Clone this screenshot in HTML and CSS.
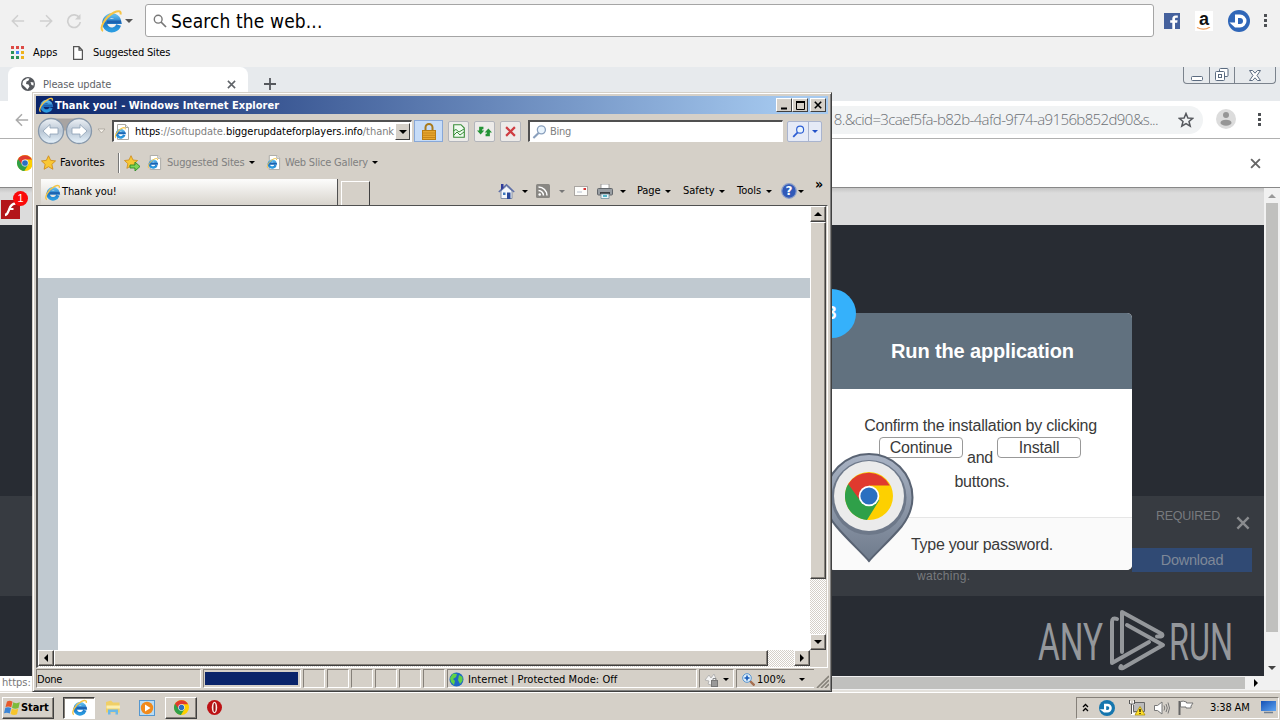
FILE: index.html
```html
<!DOCTYPE html>
<html lang="en">
<head>
<meta charset="utf-8">
<title>Desktop</title>
<link rel="stylesheet" href="styles.css">
</head>
<body>
<svg class="defs" width="0" height="0">
  <defs>
    <linearGradient id="blue" x1="0" y1="0" x2="0" y2="1"><stop offset="0" stop-color="#5cb9ec"/><stop offset=".5" stop-color="#1f74c4"/><stop offset="1" stop-color="#2a9be0"/></linearGradient>
    <linearGradient id="orb" x1="0" y1="0" x2="0" y2="1"><stop offset="0" stop-color="#eef2f6"/><stop offset=".5" stop-color="#b9c6d4"/><stop offset="1" stop-color="#e6f2fb"/></linearGradient>
    <linearGradient id="pin" x1="0" y1="0" x2="0" y2="1"><stop offset="0" stop-color="#a9b3c4"/><stop offset="1" stop-color="#6f7b8c"/></linearGradient>
    <linearGradient id="screen" x1="0" y1="0" x2="1" y2="1"><stop offset="0" stop-color="#1450b4"/><stop offset="1" stop-color="#5fa5f2"/></linearGradient>
  </defs>
  <symbol id="ie" viewBox="0 0 24 24">
    <path d="M19.600 16A7.100 7.100 0 1 1 19.800 12.500H8" fill="none" stroke="url(#blue)" stroke-width="5"/>
    <path d="M8 12.800h14" stroke="#1c62b0" stroke-width="2.600"/>
    <path d="M4 22C-.5 20 6 8 15 3.500 19 1.500 22.500 1.500 21.500 5.500" fill="none" stroke="#f5c445" stroke-width="2"/>
  </symbol>
  <symbol id="iepage" viewBox="0 0 16 16">
    <path d="M3.500.5h8l3 3v12h-11z" fill="#fff" stroke="#a9a9a4"/><path d="M11.500.5v3h3" fill="#eee" stroke="#a9a9a4"/>
    <use href="#ie" x="0" y="2.500" width="12.500" height="12.500"/>
  </symbol>
  <symbol id="chrome" viewBox="0 0 48 48">
    <circle cx="24" cy="24" r="24" fill="#fdd000"/>
    <path d="M24 24 3.200 12A24 24 0 0 0 22 48L34.400 28z" fill="#2fa049"/>
    <path d="M24 24 14 27 3.200 12A24 24 0 0 1 44.800 13.500H24z" fill="#e03a2e"/>
    <circle cx="24" cy="24" r="10.300" fill="#fff"/><circle cx="24" cy="24" r="8.600" fill="#2b6fc0"/>
  </symbol>
  <symbol id="x" viewBox="0 0 10 10"><path d="M1 1l8 8M9 1 1 9" fill="none" stroke="currentColor" stroke-width="1.700"/></symbol>
  <symbol id="left" viewBox="0 0 16 16"><path d="M15 8H2M8 1.500 1.500 8 8 14.500" fill="none" stroke="currentColor" stroke-width="1.700"/></symbol>
  <symbol id="star" viewBox="0 0 16 16"><path d="M8 .8 10.300 5.700 15.500 6.300 11.600 9.900 12.700 15.200 8 12.500 3.300 15.200 4.400 9.900.5 6.300 5.700 5.700z" fill="#f9c834" stroke="#cf8a17" stroke-width=".9"/></symbol>
  <symbol id="glass" viewBox="0 0 16 16"><path d="M1.500 14.500 7 9" stroke="currentColor" stroke-width="2.200"/><circle cx="10" cy="5.700" r="4.300" fill="#e9f4fd" stroke="currentColor" stroke-width="1.400"/></symbol>
</svg>

<main class="desktop">
  <section class="browser">
    <header class="launcher">
      <svg class="l-back" width="14" height="14"><use href="#left"/></svg>
      <svg class="l-fwd" width="14" height="14"><use href="#left"/></svg>
      <svg class="l-reload" width="16" height="16" viewBox="0 0 16 16"><path d="M13.500 5A6.300 6.300 0 1 0 14.300 9" fill="none" stroke="currentColor" stroke-width="1.700"/><path d="M14.500 1v5.500H9z" fill="currentColor"/></svg>
      <svg class="l-ie" width="24" height="24"><use href="#ie"/></svg>
      <i class="caret gray big"></i>
      <div class="search">
        <svg width="14" height="14" viewBox="0 0 14 14"><circle cx="5.200" cy="5.200" r="3.900" fill="none" stroke="#777" stroke-width="1.400"/><path d="M8 8l5 5" stroke="#777" stroke-width="1.700"/></svg>
        <span>Search the web...</span>
      </div>
      <svg class="l-fb" width="16" height="16" viewBox="0 0 16 16"><rect width="16" height="16" fill="#45619d"/><path d="M11 16V9.700h2.200l.4-2.400H11V6c0-.9.400-1.300 1.400-1.300h1.400V2.400h-2.100C9.300 2.400 8.300 3.700 8.300 5.800v1.500H6.200v2.400h2.100V16z" fill="#fff"/></svg>
      <div class="l-amazon"><b>a</b><svg width="16" height="5" viewBox="0 0 16 5"><path d="M1 .5Q8 4 14 0" fill="none" stroke="#f09a55" stroke-width="1.200"/></svg></div>
      <svg class="l-d" width="22" height="22" viewBox="0 0 22 22"><circle cx="11" cy="11" r="11" fill="#2f66b8"/><path d="M7 4.500h5a6.500 6.500 0 0 1 0 13H7L1.500 12.500H7z" fill="#fff"/><path d="M10 8h2a3 3 0 0 1 0 6h-2z" fill="#2f66b8"/></svg>
      <i class="dots"></i>
    </header>
    <nav class="bookmarks">
      <svg width="13" height="13" viewBox="0 0 13 13"><path d="M0 0h3v3H0zM5 0h3v3H5zM10 0h3v3h-3z" fill="#dd4b45"/><path d="M0 5h3v3H0zM0 10h3v3H0zM5 10h3v3H5z" fill="#2c9156"/><path d="M5 5h3v3H5z" fill="#4285f4"/><path d="M10 5h3v3h-3zM10 10h3v3h-3z" fill="#eeb21c"/></svg>
      <span class="b-apps">Apps</span>
      <svg width="10" height="14" viewBox="0 0 10 14"><path d="M.6.6h5.400l3.400 3.600v9.200H.6zM6 .6v3.600h3.400" fill="#fff" stroke="#555" stroke-width="1.200"/></svg>
      <span class="b-sites">Suggested Sites</span>
    </nav>
    <div class="tabstrip">
      <div class="tab">
        <svg width="14" height="14" viewBox="0 0 14 14"><circle cx="7" cy="7" r="7" fill="#55585d"/><path d="M6 1.200 8.500 1.500 7.500 3.500 5.500 4.500 5 7 7.500 7.500 8.500 9.500 6.500 12.500 4 10 1.300 7.500 2 4z" fill="#fff"/><path d="M9.500 5l3 .5v3L10.500 8z" fill="#fff"/></svg>
        <span>Please update</span>
        <svg width="9" height="9"><use href="#x"/></svg>
      </div>
      <svg class="plus" width="12" height="12" viewBox="0 0 12 12"><path d="M6 0v12M0 6h12" stroke="#55585d" stroke-width="1.800"/></svg>
      <div class="winbtns">
        <span><svg width="12" height="5" viewBox="0 0 12 5"><rect x=".5" y=".5" width="11" height="4" rx="1" fill="#fff" stroke="#5b6b80"/></svg></span>
        <span><svg width="14" height="13" viewBox="0 0 14 13"><rect x="4.500" y=".5" width="8.500" height="8" rx="1" fill="#fff" stroke="#5b6b80"/><rect x=".5" y="3.500" width="9" height="9" rx="1" fill="#fff" stroke="#5b6b80"/><rect x="3.500" y="6.500" width="3" height="3" fill="none" stroke="#5b6b80"/></svg></span>
        <span><svg width="12" height="11" viewBox="0 0 12 11"><path d="M.5.5h3L6 3.200 8.500.5h3L8 5.500l3.500 5h-3L6 7.800 3.500 10.500h-3L4 5.500z" fill="#fff" stroke="#5b6b80"/></svg></span>
      </div>
    </div>
    <div class="toolbar">
      <svg class="t-back" width="14" height="14"><use href="#left"/></svg>
      <div class="omnibox"><span>8.&amp;cid=3caef5fa-b82b-4afd-9f74-a9156b852d90&amp;s...</span>
        <svg width="16" height="16" viewBox="0 0 16 16"><path d="M8 1.500 9.900 6 14.700 6.300 11 9.500 12.200 14.200 8 11.600 3.800 14.200 5 9.500 1.300 6.300 6.100 6z" fill="none" stroke="#55585d" stroke-width="1.500"/></svg></div>
      <svg class="avatar" width="20" height="20" viewBox="0 0 20 20"><circle cx="10" cy="10" r="10" fill="#dcdcdc"/><circle cx="10" cy="6" r="3" fill="#969696"/><ellipse cx="10" cy="13.700" rx="5.500" ry="3" fill="#969696"/></svg>
      <i class="dots"></i>
    </div>
    <div class="infobar">
      <svg width="16" height="16"><use href="#chrome"/></svg>
      <svg class="i-close" width="11" height="11"><use href="#x"/></svg>
    </div>
    <div class="viewport">
      <div class="page">
        <div class="pagehead">
          <div class="flash"><svg width="19" height="19" viewBox="0 0 19 19"><rect width="19" height="19" fill="#b3151a"/><path d="M14.500 3.500C10 3.500 9 7 8 9.800 7 12.500 6.500 14.800 4 15" fill="none" stroke="#fff" stroke-width="2.300"/><path d="M8 9h4.500" stroke="#fff" stroke-width="2"/></svg><b>1</b></div>
        </div>
        <div class="stage">
          <div class="promo">
            <span class="watching">watching.</span>
            <div class="promo-side">
              <div class="req"><span>REQUIRED</span><svg width="14" height="14"><use href="#x"/></svg></div>
              <div class="download">Download</div>
            </div>
          </div>
          <article class="card">
            <h2>Run the application</h2>
            <div class="steps">
              <p>Confirm the installation by clicking</p>
              <div class="btns"><span class="key">Continue</span><em>and</em><span class="key">Install</span></div>
              <p class="last">buttons.</p>
            </div>
            <footer>Type your password.</footer>
            <b class="stepno">3</b>
            <svg class="pin" width="90" height="110" viewBox="0 0 90 110"><path d="M45 108C39 101 21 84 12 73 5 65 1.500 57 1.500 44.500a43.500 43.500 0 0 1 87 0C88.500 57 84 65 78 73 69 84 51 101 45 108z" fill="url(#pin)" stroke="#596373" stroke-width="2"/><circle cx="45" cy="44.500" r="37.500" fill="#6d7889"/><circle cx="45" cy="43" r="35" fill="#ebebeb"/><use href="#chrome" x="21" y="18" width="48" height="50"/></svg>
          </article>
          <svg class="anyrun" width="210" height="66" viewBox="0 0 210 66">
            <text x="1" y="50.500" textLength="65" lengthAdjust="spacingAndGlyphs">ANY</text>
            <g fill="none" stroke="#94979b" stroke-width="4" stroke-linejoin="round" stroke-linecap="round"><path d="M80 10Q75 8 75 13V54L112 33"/><path d="M85 43V3L125 25Q127 28 120 27.500"/><path d="M90 16 126 36 86 59Q82 60 84 57"/></g>
            <text x="132" y="50.500" textLength="64" lengthAdjust="spacingAndGlyphs">RUN</text>
          </svg>
        </div>
      </div>
      <div class="cscroll"><i class="tri up"></i><i class="cthumb"></i><i class="tri down"></i></div>
    </div>
    <div class="hscroll"><span class="statusurl">https:</span><i class="hthumb"></i><i class="tri right"></i></div>
  </section>

  <section class="iewin">
    <div class="title">
      <svg width="16" height="16"><use href="#ie"/></svg><b>Thank you! - Windows Internet Explorer</b>
      <span class="tb"><svg width="9" height="9" viewBox="0 0 9 9"><path d="M1 7.500h6" stroke="#000" stroke-width="2"/></svg></span>
      <span class="tb"><svg width="9" height="9" viewBox="0 0 9 9"><path d="M.5 1v7.500h8V1M0 1h9" fill="none" stroke="#000"/><path d="M0 1h9" stroke="#000" stroke-width="2"/></svg></span>
      <span class="tb tbx"><svg width="8" height="8" viewBox="0 0 10 10"><path d="M1 1l8 8M9 1 1 9" stroke="#000" stroke-width="2"/></svg></span>
    </div>
    <div class="navrow">
      <svg class="orbs" width="56" height="28" viewBox="0 0 56 28"><path d="M14 1.500h28v12H14z" fill="#a8a4a2"/><g fill="url(#orb)" stroke="#8697aa" stroke-width="1.300"><circle cx="14" cy="14" r="12.500"/><circle cx="42" cy="14" r="12.500"/></g><path d="M6 14 13 7.500V11h8v6h-8v3.500zM50 14 43 7.500V11h-8v6h8v3.500z" fill="#fff" stroke="#8ca0b4" stroke-width=".8"/></svg>
      <svg class="heart" width="9" height="6" viewBox="0 0 9 6"><path d="M1 1h7L4.500 5z" fill="#f5f1ea" stroke="#a8a39b" stroke-width=".8"/></svg>
      <div class="addr"><svg width="16" height="16"><use href="#iepage"/></svg><span>https<i>://softupdate.</i>biggerupdateforplayers.info<i>/thank</i></span><div class="combo"><i class="tri down"></i></div></div>
      <div class="lock"><svg width="16" height="17" viewBox="0 0 16 17"><path d="M4.500 8V4.500a3.500 3.500 0 0 1 7 0V8" fill="none" stroke="#a87a1c" stroke-width="2"/><rect x="1.500" y="7.500" width="13" height="9" fill="#e8a72e" stroke="#b97d14"/><path d="M2 10h12M2 12.300h12M2 14.500h12" stroke="#c88618"/></svg></div>
      <div class="nb compat"><svg width="12" height="14" viewBox="0 0 12 14"><path d="M.7.7H8l3.300 3.300v9.300H.7z" fill="#f0fbf0" stroke="#388c38" stroke-width="1.100"/><path d="M0 7 3 5.500 6 8l5-3M1 11l3-3 3 3 4-3" fill="none" stroke="#388c38"/></svg></div>
      <div class="nb"><svg width="15" height="13" viewBox="0 0 14 12"><path d="M0 5h2V1.500h4v2.500H4.800V5h2L3.400 8.700zM14 7h-2v3.500H8V8h1.200V7h-2L10.600 3.300z" fill="#249336"/></svg></div>
      <div class="nb"><svg width="11" height="11" viewBox="0 0 10 10"><path d="M1 1l8 8M9 1 1 9" stroke="#cf3d42" stroke-width="2"/></svg></div>
      <div class="bing"><svg width="15" height="16"><use href="#glass"/></svg><span>Bing</span></div>
      <div class="go"><svg width="13" height="13"><use href="#glass"/></svg><i class="caret blue"></i></div>
    </div>
    <div class="favrow">
      <svg width="15" height="15"><use href="#star"/></svg><span class="f1">Favorites</span><i class="sep"></i>
      <svg class="addstar" width="16" height="16" viewBox="0 0 16 16"><use href="#star" width="14" height="14"/><path d="M6 10h5V7l5 4.500-5 4.500v-3H6z" fill="#7fd457" stroke="#2e8a27" stroke-width=".9"/></svg>
      <svg class="pg1" width="15" height="15"><use href="#iepage"/></svg><span class="f2">Suggested Sites</span><i class="caret"></i>
      <svg class="pg2" width="15" height="15"><use href="#iepage"/></svg><span class="f3">Web Slice Gallery</span><i class="caret"></i>
    </div>
    <div class="tabrow">
      <div class="ietab"><svg width="17" height="17"><use href="#ie"/></svg><span>Thank you!</span></div>
      <div class="newtab"></div>
      <div class="cmds">
        <svg width="17" height="17" viewBox="0 0 17 17"><path d="M3 8v7.500h11V8L8.500 3z" fill="#f4f7fb" stroke="#8390a8"/><path d="M.8 9 8.500 1.700 16.200 9" fill="none" stroke="#5f70a8" stroke-width="1.500"/><path d="M3 1h2.500v4L3 7z" fill="#303c9c"/><path d="M9 9.500h3.500V16H9z" fill="#29489a"/><path d="M5 9.500h2.500V12H5z" fill="#3b76bd"/></svg>
        <i class="caret c1"></i>
        <svg class="rss" width="14" height="14" viewBox="0 0 14 14"><rect width="14" height="14" rx="1.500" fill="#898783"/><g fill="none" stroke="#fff" stroke-width="1.500"><path d="M2.500 3a8.500 8.500 0 0 1 8.500 8.500M2.500 6.500a5 5 0 0 1 5 5"/></g><circle cx="3.700" cy="10.500" r="1.300" fill="#fff"/></svg>
        <i class="caret gray c2"></i>
        <svg class="mail" width="14" height="10" viewBox="0 0 14 10"><rect x=".5" y=".5" width="13" height="9" fill="#fdfdfb" stroke="#aaa6a2"/><path d="M9.500 2h2.500v2H9.500z" fill="#d53535"/><path d="M3 6h5" stroke="#b8c0cc"/></svg>
        <svg class="print" width="16" height="15" viewBox="0 0 16 15"><path d="M4 0h8v5H4z" fill="#fff" stroke="#8a8a8a" stroke-width=".8"/><rect x=".5" y="4.500" width="15" height="6.500" rx="1" fill="#999ea3" stroke="#63676b"/><path d="M3 8h10v2H3z" fill="#3a3e42"/><path d="M4 10h8v4.500H4z" fill="#e7f5fa" stroke="#75909c" stroke-width=".8"/><path d="M6 12h4" stroke="#22a0ba" stroke-width="1.500"/></svg>
        <i class="caret c3"></i>
        <span class="w1">Page</span><i class="caret"></i>
        <span class="w2">Safety</span><i class="caret"></i>
        <span class="w3">Tools</span><i class="caret"></i>
        <svg class="help" width="16" height="16" viewBox="0 0 16 16"><circle cx="8" cy="8" r="7.300" fill="#3159b8" stroke="#8c9fc8" stroke-width="1.200"/><text x="8" y="12.300" text-anchor="middle">?</text></svg><i class="caret"></i>
        <b class="more">»</b>
      </div>
    </div>
    <div class="content">
      <div class="doc"><div class="sheet"></div></div>
      <div class="vs"><span class="sb"><i class="tri up"></i></span><span class="vthumb"></span><span class="sb end"><i class="tri down"></i></span></div>
      <div class="hs"><span class="sb"><i class="tri left"></i></span><span class="h2thumb"></span><span class="sb end"><i class="tri right"></i></span></div>
      <div class="corner"></div>
    </div>
    <div class="status">
      <span class="pn done">Done</span><span class="pn prog"><i></i></span>
      <span class="pn"></span><span class="pn"></span><span class="pn"></span><span class="pn"></span><span class="pn"></span><span class="pn"></span>
      <span class="pn zone"><svg width="15" height="15" viewBox="0 0 15 15"><circle cx="7.500" cy="7.500" r="7" fill="#1e67c4"/><path d="M4 1.500l4 .5-1 3-3 2 2 2-1 4-3-3L1 6zM10 3l3.500 2v4L11 12 9 8z" fill="#5fd146"/></svg>Internet | Protected Mode: Off</span>
      <span class="pn shield"><svg width="15" height="14" viewBox="0 0 15 14"><path d="M1 7 5 2 7 5 10 1l2 5-5 6-3-1 1-3z" fill="#f5f5f5" stroke="#aaa" stroke-width=".8"/><rect x="7.500" y="7.500" width="6" height="6" fill="#999" stroke="#777"/><path d="M9 7.500V5.500h3v2" fill="none" stroke="#888"/></svg><i class="caret"></i></span>
      <span class="pn zoom"><svg width="13" height="13" viewBox="0 0 13 13"><path d="M8 8l4.500 4.500" stroke="#a66f50" stroke-width="2.400"/><circle cx="5" cy="5" r="4.300" fill="#dff0fc" stroke="#5794cf"/><path d="M5 2.500v5M2.500 5h5" stroke="#1559b8" stroke-width="1.600"/></svg><em>100%</em><i class="caret"></i></span>
      <svg class="grip" width="13" height="13" viewBox="0 0 13 13"><path d="M1 13 13 1M5 13l8-8M9 13l4-4" stroke="#858179" stroke-width="1.600"/></svg>
    </div>
  </section>

  <footer class="taskbar">
    <div class="start"><svg width="17" height="16" viewBox="0 0 17 16"><path d="M3 1.500Q6 0 8.500 1.800L7.300 7.300Q4.500 5.800 1.500 7z" fill="#e75a2c"/><path d="M9.300 2.200Q12.500 4 15.800 2.300L14.500 8Q11 9.500 8 7.700z" fill="#7dbb3c"/><path d="M1.300 7.800Q4.300 6.500 7.100 8.100L5.800 13.600Q3 12 0 13.300z" fill="#3c85d6"/><path d="M7.900 8.500Q11 10.300 14.200 8.700L13 14.300Q10 15.700 6.600 14z" fill="#f7c52b"/></svg><b>Start</b></div>
    <div class="task pressed"><svg width="17" height="17"><use href="#ie"/></svg></div>
    <svg class="folder" width="16" height="15" viewBox="0 0 16 15"><path d="M1 2 6 .5 8 2.500h6.500v10H1z" fill="#f0cf66"/><path d="M1.500 5.500h13.500v3H1.500z" fill="#fbeeb0"/><path d="M3 14.500V9.500h10v5h-2.500V12h-5v2.500z" fill="#6cb9e8"/></svg>
    <svg class="wmp" width="16" height="16" viewBox="0 0 16 16"><rect x=".5" y=".5" width="15" height="15" fill="#b9dcf4" stroke="#5597cf"/><circle cx="8" cy="8" r="6.200" fill="#f18a1b"/><path d="M6 4.500v7L11.500 8z" fill="#fff"/></svg>
    <div class="task"><svg width="15" height="15"><use href="#chrome"/></svg></div>
    <svg class="opera" width="15" height="15" viewBox="0 0 15 15"><circle cx="7.500" cy="7.500" r="7.500" fill="#bd1215"/><ellipse cx="7.500" cy="7.500" rx="2.700" ry="5.700" fill="#fbe9e6"/><ellipse cx="7.500" cy="7.500" rx="1.100" ry="4.600" fill="#9a1012"/></svg>
    <div class="tray">
      <svg width="7" height="9" viewBox="0 0 7 9"><path d="M1 4 3.500 1.500 6 4M1 8l2.500-2.500L6 8" fill="none" stroke="#000" stroke-width="1.300"/></svg>
      <svg class="y-d" width="16" height="16" viewBox="0 0 16 16"><circle cx="8" cy="8" r="8" fill="#1576ae"/><path d="M5 3.800h3.500a4.300 4.300 0 0 1 0 8.600H5L.8 9.200H5z" fill="#fff"/><path d="M7.200 6.200h1.200a1.900 1.900 0 0 1 0 3.800H7.200z" fill="#1576ae"/></svg>
      <svg class="y-net" width="17" height="16" viewBox="0 0 17 16"><path d="M4.500 2.500h11v9h-11z" fill="#bbb" stroke="#666"/><path d="M1 1v3h4V1M3 4v10h3" fill="none" stroke="#fff" stroke-width="2"/><path d="M.5 0v4h5V0M2.500 4v10" fill="none" stroke="#555"/><path d="M11 6.500 16 15H6z" fill="#ffdf2b" stroke="#a78900" stroke-width=".7"/><path d="M11 9v3M11 13v1" stroke="#000" stroke-width="1.200"/></svg>
      <svg class="y-vol" width="16" height="14" viewBox="0 0 16 14"><path d="M.5 4.500h3L8 1v12L3.500 9.500h-3z" fill="#fff" stroke="#777"/><path d="M10 4.500q1.500 2.500 0 5M12 3q2.500 4 0 8M14 1.500q3 5.500 0 11" fill="none" stroke="#777"/></svg>
      <svg class="y-flag" width="16" height="15" viewBox="0 0 16 15"><path d="M1.500 1v14" stroke="#666" stroke-width="2"/><path d="M2.500 1.500Q5 .5 8.500 2v1H15l-2 3 0 2H8V7H2.500z" fill="#fff" stroke="#777"/></svg>
      <span>3:38 AM</span>
      <svg class="y-show" width="15" height="13" viewBox="0 0 15 13"><rect width="15" height="10" fill="url(#screen)"/><path d="M3 11.500h9" stroke="#6f7f91" stroke-width="1.500"/></svg>
    </div>
  </footer>
</main>
</body>
</html>
```
FILE: styles.css
```css
* { box-sizing: border-box; }
body { margin: 0; width: 1280px; height: 720px; overflow: hidden; font: 11px/14px "DejaVu Sans Condensed", "DejaVu Sans", sans-serif; font-stretch: condensed; color: #000; }
svg { display: block; flex: none; }
.defs { position: absolute; }
i, em { font-style: normal; }
span { white-space: nowrap; }
.desktop { position: relative; width: 1280px; height: 720px; background: #d5d0c8; display: flex; flex-direction: column; }
.caret { flex: none; width: 0; height: 0; border: 3px solid transparent; border-top-color: #000; border-bottom: 0; }
.caret.gray { border-top-color: #777; }
.caret.big { border-width: 4px 4px 0; border-top-color: #555; }
.caret.blue { border-top-color: #2351c8; }
.tri { flex: none; width: 0; height: 0; border: 4px solid transparent; }
.tri.up { border-bottom-color: #000; border-top: 0; }
.tri.down { border-top-color: #000; border-bottom: 0; }
.tri.left { border-right-color: #000; border-left: 0; }
.tri.right { border-left-color: #000; border-right: 0; }
.dots { flex: none; width: 3px; height: 13px; background: radial-gradient(circle at 1.5px 1.5px, #4c4f53 1.4px, transparent 1.9px) 0 0 / 3px 5px; }

/* Background browser */
.browser { height: 692px; display: flex; flex-direction: column; background: #f1f1f1; }
.launcher { height: 41px; flex: none; display: flex; align-items: center; padding-left: 11px; color: #cfcfcf; }
.l-fwd { margin-left: 14px; transform: scaleX(-1); }
.l-reload { margin-left: 13px; }
.l-ie { margin-left: 17px; margin-right: 2px; }
.search { margin-left: 12px; width: 1009px; height: 33px; border: 1px solid #a5a5a5; border-radius: 3px; background: #fff; display: flex; align-items: center; padding-left: 7px; }
.search span { margin-left: 4px; color: #000; font-size: 19px; line-height: 24px; letter-spacing: .13px; }
.l-fb { margin-left: 10px; }
.l-amazon { width: 18px; height: 20px; margin-left: 15px; background: #fff; color: #111; display: flex; flex-direction: column; align-items: center; }
.l-amazon b { font: bold 18px/16px "Liberation Sans", sans-serif; }
.l-d { margin-left: 15px; margin-right: 14px; }
.bookmarks { height: 26px; flex: none; display: flex; align-items: center; padding: 0 0 3px 11px; }
.b-apps { width: 40px; margin-left: 9px; }
.b-sites { margin-left: 10px; letter-spacing: -.18px; }
.tabstrip { height: 34px; flex: none; display: flex; background: #e7eaed; padding-left: 8px; }
.tab { width: 240px; height: 34px; border-radius: 8px 8px 0 0; background: #fff; display: flex; align-items: center; padding-left: 13px; color: #5f6368; }
.tab span { width: 184px; margin-left: 8px; padding-top: 1px; letter-spacing: -.15px; }
.plus { margin: 11px 0 0 16px; }
.winbtns { display: flex; height: 17px; margin-left: 907px; border: 1px solid #7b838d; border-top: 0; border-radius: 0 0 4px 4px; }
.winbtns span { width: 25px; display: flex; align-items: flex-end; justify-content: center; padding-bottom: 2px; }
.winbtns span + span { border-left: 1px solid #7b838d; }
.winbtns span:last-child { width: 41px; }
.toolbar { height: 38px; flex: none; background: #fff; border-bottom: 1px solid #b0b0b0; display: flex; align-items: center; padding-left: 15px; color: #aaa; }
.omnibox { width: 1149px; margin-left: 25px; height: 28px; border-radius: 14px; background: #f1f3f4; display: flex; align-items: center; justify-content: flex-end; padding-right: 8px; color: #6c7075; }
.omnibox span { font: 300 15px/20px "Open Sans", sans-serif; margin: -1px 20px 0 0; letter-spacing: -.62px; }
.omnibox svg { margin-right: 1px; }
.avatar { margin: -2px 31px 0 13px; }
.toolbar .dots { width: 3px; margin-left: -9px; }
.infobar { height: 49px; flex: none; background: #fff; border-bottom: 1px solid #888; display: flex; align-items: center; justify-content: space-between; padding: 0 19px 0 17px; color: #666; }
.viewport { height: 488px; flex: none; display: flex; }
.page { width: 1264px; display: flex; flex-direction: column; }
.pagehead { height: 37px; flex: none; background: linear-gradient(#c5c5c5, #dcdcdc 5px); padding: 12px 0 0 1px; }
.flash { position: relative; width: 19px; }
.flash b { position: absolute; left: 12px; top: -9px; width: 15px; height: 15px; border-radius: 50%; background: #fa0a0a; color: #fff; font: 11px/15px "Liberation Sans", sans-serif; text-align: center; }
.stage { position: relative; flex: 1; background: #282c33; font-family: "Liberation Sans", sans-serif; }
.promo { position: absolute; left: 0; top: 271px; width: 1264px; height: 100px; background: #373b41; display: flex; color: #777a7e; }
.watching { width: 1132px; padding: 73px 0 0 917px; font-size: 12px; letter-spacing: .3px; }
.promo-side { width: 120px; }
.req { display: flex; justify-content: space-between; padding: 12px 2px 0 24px; height: 52px; font-size: 12.500px; line-height: 16px; letter-spacing: -.25px; }
.req svg { margin-top: 8px; color: #8a8c8f; }
.download { height: 24px; background: #304a74; text-align: center; font-size: 14.500px; line-height: 24px; letter-spacing: -.25px; color: #7e8898; }
.card { position: absolute; left: 829px; top: 88px; width: 303px; height: 257px; border-radius: 5px; background: #fff; color: #3a3a3a; }
.card h2 { margin: 0; height: 76px; border-radius: 5px 5px 0 0; background: #61717f; color: #fff; text-align: center; font-size: 20px; line-height: 76px; letter-spacing: -.14px; padding-left: 4px; }
.steps { height: 128px; padding: 25px 0 0; font-size: 16px; line-height: 24px; text-align: center; }
.steps p { margin: 0; letter-spacing: -.23px; }
.btns { display: flex; justify-content: center; height: 32px; gap: 4px; margin-top: -1px; letter-spacing: -.2px; padding-right: 1px; }
.btns em { padding-top: 9px; }
.key { width: 84px; height: 21px; border: 1px solid #999; border-radius: 4px; line-height: 20px; }
.steps .last { padding: 1px 0 0 3px; }
.card footer { height: 53px; border-top: 1px solid #e6e6e6; border-radius: 0 0 5px 5px; background: #fafafa; font-size: 16px; line-height: 54px; text-align: center; padding-left: 3px; letter-spacing: -.3px; }
.stepno { position: absolute; left: -22px; top: -24px; width: 49px; height: 49px; border-radius: 50%; background: #35b1fb; color: #fff; font-size: 18px; line-height: 49px; text-align: center; }
.pin { position: absolute; left: -5px; top: 140px; }
.anyrun { position: absolute; left: 1037px; top: 384px; overflow: visible; }
.anyrun text { font: 400 52px Roboto, sans-serif; fill: #94979b; }
.cscroll { width: 16px; background: #f1f1f1; display: flex; flex-direction: column; align-items: center; padding: 6px 0; }
.cscroll .up { border-bottom-color: #999; }
.cscroll .down { margin-top: auto; border-top-color: #444; }
.cthumb { width: 12px; height: 429px; margin-top: 5px; background: #c0c0be; }
.hscroll { height: 16px; flex: none; background: #f1f1f1; border-bottom: 2px solid #e3e0db; display: flex; align-items: center; }
.statusurl { width: 34px; height: 17px; margin-top: -1px; background: #fff; color: #777; line-height: 18px; padding-left: 2px; }
.hthumb { width: 1211px; height: 12px; background: #c0c0be; margin-right: 9px; }

/* Foreground window */
.iewin { position: absolute; left: 32px; top: 92px; width: 800px; height: 600px; background: #d5d0c8; border: 1px solid; border-color: #d5d0c8 #404040 #404040 #d5d0c8; box-shadow: inset 1px 1px #fff, inset -1px -1px #808080; padding: 3px; display: flex; flex-direction: column; }
.title { height: 18px; flex: none; background: linear-gradient(90deg, #0a246a, #a6caf0 96%); display: flex; align-items: center; color: #fff; padding: 0 2px; }
.title > b { flex: 1; margin-left: 1px; letter-spacing: .03px; padding-top: 1px; }
.tb { width: 16px; height: 14px; background: #d5d0c8; border: 1px solid; border-color: #fff #404040 #404040 #fff; display: flex; align-items: center; justify-content: center; }
.tbx { margin-left: 2px; }
.navrow { height: 34px; flex: none; display: flex; align-items: center; padding-left: 1px; }
.heart { margin-left: 4px; }
.addr { width: 300px; height: 22px; margin-left: 6px; background: #fff; border: 1px solid #fff; border-top: 2px solid #505050; border-left: 2px solid #505050; display: flex; align-items: center; }
.addr > span { width: 260px; margin-left: 5px; overflow: hidden; letter-spacing: -.05px; padding-top: 1px; }
.addr > span i { color: #808080; }
.combo { width: 15px; height: 17px; background: #d5d0c8; border: 1px solid; border-color: #fff #404040 #404040 #fff; display: flex; align-items: center; justify-content: center; }
.lock { width: 29px; height: 22px; margin-left: 2px; background: #c6dcf8; border: 1px solid #88a8d8; display: flex; align-items: center; justify-content: center; }
.nb { width: 21px; height: 21px; margin-left: 5px; background: #edebe9; border: 1px solid #b3b5bb; border-radius: 2px; display: flex; align-items: center; justify-content: center; }
.bing { width: 255px; height: 22px; margin-left: 7px; background: #fff; border: 1px solid #fff; border-top: 2px solid #505050; border-left: 2px solid #505050; display: flex; align-items: center; padding-left: 2px; color: #808080; }
.bing svg { color: #8aa0bd; }
.bing span { margin-left: 3px; padding-top: 1px; letter-spacing: -.25px; }
.go { width: 35px; height: 21px; margin-left: 4px; background: linear-gradient(90deg, #e5eaf7 20px, #a9b4cf 20px 21px, #e5eaf7 21px); border: 1px solid #a9b4cf; border-radius: 2px; display: flex; align-items: center; padding-left: 4px; color: #2d5ed4; }
.go .caret { margin-left: 7px; }
.favrow { height: 29px; flex: none; display: flex; align-items: center; padding-left: 5px; color: #808080; }
.f1, .f2, .f3 { padding-top: 1px; }
.f1 { width: 54px; margin-left: 4px; color: #000; }
.sep { width: 2px; height: 20px; margin-left: 4px; border-left: 1px solid #777; border-right: 1px solid #fff; }
.addstar { margin-left: 4px; }
.pg1 { margin-left: 7px; }
.pg2 { margin-left: 11px; }
.f2 { width: 78px; margin-left: 5px; letter-spacing: -.16px; margin-right: 4px; }
.f3 { width: 83px; margin-left: 4px; letter-spacing: -.2px; margin-right: 4px; }
.tabrow { height: 28px; flex: none; display: flex; align-items: flex-end; padding-left: 5px; }
.ietab { width: 297px; height: 26px; background: linear-gradient(#fdfdfc, #d8d4cd); border-right: 1px solid #505050; display: flex; align-items: center; padding-left: 3px; }
.ietab span { margin-left: 1px; letter-spacing: -.1px; }
.newtab { width: 29px; height: 24px; margin-left: 3px; border: 1px solid; border-color: #fff #404040 transparent #fff; border-bottom: 0; }
.cmds { height: 28px; display: flex; align-items: center; margin-left: 128px; }
.c1 { margin-left: 7px; }
.rss { margin-left: 8px; }
.c2 { margin-left: 9px; }
.mail { margin-left: 9px; }
.print { margin-left: 9px; }
.c3 { margin: 0 11px 0 7px; }
.w1 { width: 28px; letter-spacing: -.1px; }
.w2 { width: 36px; margin-left: 12px; }
.w3 { width: 29px; margin-left: 12px; letter-spacing: 0; }
.help { margin: 0 1px 0 9px; }
.help text { font: bold 12px "DejaVu Sans", sans-serif; fill: #fff; }
.more { margin: -14px 0 0 11px; font-size: 14px; }
.content { height: 463px; flex: none; margin-left: 0; border: 1px solid #505050; border-left-width: 2px; border-right: 1px solid #fff; border-bottom: 1px solid #fff; display: grid; grid-template: 444px 17px / 772px 16px; background: #d5d0c8; }
.doc { background: #c0c9d0; border-top: 72px solid #fff; padding: 20px 0 0 20px; display: flex; }
.sheet { flex: 1; background: #fff; }
.vs, .hs { display: flex; background: repeating-conic-gradient(#fff 0 25%, #d5d0c8 0 50%) 0 0 / 2px 2px; }
.vs { flex-direction: column; }
.sb, .vthumb, .h2thumb { flex: none; background: #d5d0c8; border: 1px solid; border-color: #fff #404040 #404040 #fff; box-shadow: inset -1px -1px #858079; }
.sb { width: 16px; height: 16px; display: flex; align-items: center; justify-content: center; }
.end { margin: auto 0 0; }
.vthumb { height: 357px; }
.h2thumb { width: 714px; height: 16px; }
.hs .end { margin: 0 0 0 auto; }
.status { height: 20px; flex: none; display: flex; align-items: stretch; gap: 2px; padding-top: 1px; }
.pn { width: 22px; border: 1px solid; border-color: #858079 #fff #fff #858079; display: flex; align-items: center; flex: none; }
.done { width: 165px; letter-spacing: -.2px; }
.prog { width: 98px; padding: 1px 2px 1px 1px; }
.prog i { flex: 1; height: 13px; background: #0a246a; }
.zone { width: 250px; letter-spacing: .06px; padding-left: 1px; }
.zone svg { margin-right: 4px; }
.shield { width: 35px; padding-left: 4px; }
.shield .caret { margin-left: 4px; }
.zoom { width: 78px; padding-left: 5px; border-right: 0; }
.zoom em { width: 42px; margin-left: 2px; }
.status .pn { padding-top: 2px; }
.status .prog { padding-top: 1px; }
.grip { margin: 6px 0 0 auto; }

/* Taskbar */
.taskbar { height: 28px; flex: none; background: #d5d0c8; border-top: 1px solid #fff; display: flex; align-items: center; padding: 2px 1px 0 2px; }
.start, .task { display: flex; align-items: center; border: 1px solid; border-color: #fff #404040 #404040 #fff; box-shadow: inset -1px -1px #858079; }
.start { width: 52px; height: 22px; padding-left: 1px; }
.start b { letter-spacing: -.1px; }
.task { width: 32px; height: 22px; justify-content: center; }
.pressed { margin-left: 9px; background: #fff; border-color: #404040 #fff #fff #404040; box-shadow: inset 1px 1px #858079; }
.folder { margin-left: 10px; }
.wmp { margin-left: 18px; }
.wmp + .task { margin-left: 10px; }
.opera { margin-left: 10px; }
.tray { width: 203px; height: 22px; margin-left: auto; border: 1px solid; border-color: #858079 #fff #fff #858079; display: flex; align-items: center; padding-left: 5px; }
.y-d { margin-left: 10px; }
.y-net { margin-left: 14px; }
.y-vol { margin-left: 8px; }
.y-flag { margin-left: 8px; }
.tray span { width: 42px; margin-left: 16px; letter-spacing: -.15px; }
.y-show { margin-left: 9px; }
```
